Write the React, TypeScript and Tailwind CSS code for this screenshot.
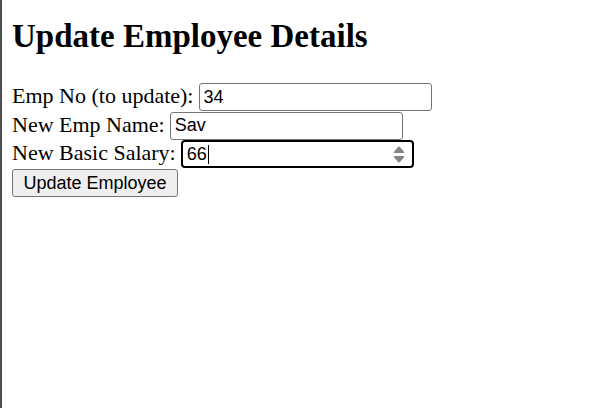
import React from "react";

const serif = "font-['Liberation_Serif','Times_New_Roman',serif]";
const sans = "font-['Liberation_Sans',Arial,sans-serif]";

// One label + input line of the form
const Row = ({ label, children }: { label: string; children: React.ReactNode }) => (
  <div className="flex items-start h-[28.5px]">
    <span className={`${serif} text-[22px] leading-[26px] text-black whitespace-nowrap`}>{label}</span>
    <div className="ml-[5.5px]">{children}</div>
  </div>
);

const App: React.FC = () => {
  return (
    <div className="h-[408px] w-full bg-white border-l-2 border-[#505050] pl-[10px] overflow-hidden">
      <h1 className={`${serif} font-bold text-[33px] leading-[38px] text-black pt-[17px] whitespace-nowrap`}>
        Update Employee Details
      </h1>

      <form className="mt-[28px] flex flex-col" onSubmit={(e) => e.preventDefault()}>
        <Row label="Emp No (to update):">
          <input
            type="text"
            defaultValue="34"
            className={`${sans} block w-[233px] h-[28px] border border-[#767676] rounded-[3px] px-[3.5px] text-[18px] text-black outline-none`}
          />
        </Row>
        <Row label="New Emp Name:">
          <input
            type="text"
            defaultValue="Sav"
            className={`${sans} block w-[233px] h-[28px] border border-[#767676] rounded-[3px] px-[3.5px] text-[18px] text-black outline-none`}
          />
        </Row>
        <Row label="New Basic Salary:">
          <div className="relative w-[233px] h-[28px] border-2 border-black rounded-[4px]">
            <input
              type="text"
              readOnly
              defaultValue="66"
              className={`${sans} block w-full h-full bg-transparent pl-[3.5px] pr-[24px] text-[18px] text-black outline-none`}
            />
            {/* caret */}
            <span className="absolute left-[25px] top-[3px] w-px h-[19px] bg-black" />
            {/* spin buttons */}
            <svg className="absolute right-[7px] top-[4px]" width="12" height="17" viewBox="0 0 12 17">
              <path d="M6 0.5 Q6.6 0.5 7.2 1.3 L11.2 6 Q11.6 7 10.6 7 H1.4 Q0.4 7 0.8 6 L4.8 1.3 Q5.4 0.5 6 0.5 Z" fill="#858585" />
              <path d="M6 16.5 Q6.6 16.5 7.2 15.7 L11.2 11 Q11.6 10 10.6 10 H1.4 Q0.4 10 0.8 11 L4.8 15.7 Q5.4 16.5 6 16.5 Z" fill="#858585" />
            </svg>
          </div>
        </Row>
        <div className="pt-[0.5px]">
          <button
            type="submit"
            className={`${sans} w-[166px] h-[28px] bg-[#efefef] border border-[#767676] rounded-[3px] text-[18px] text-black leading-none`}
          >
            Update Employee
          </button>
        </div>
      </form>
    </div>
  );
};

export default App;
